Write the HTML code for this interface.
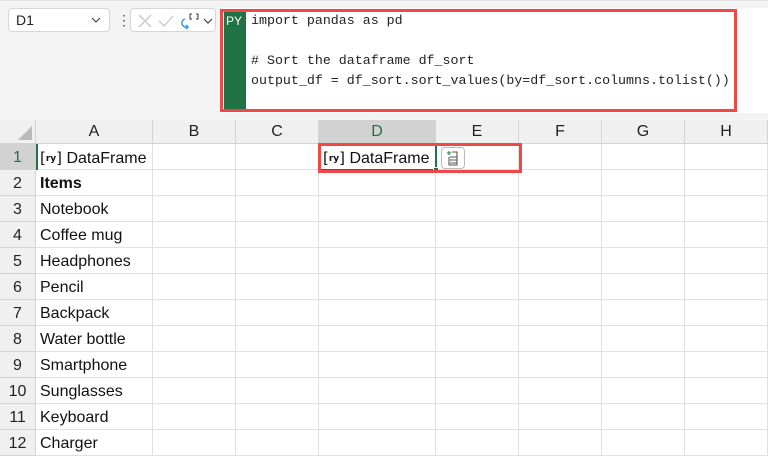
<!DOCTYPE html>
<html><head><style>
*{margin:0;padding:0;box-sizing:border-box}
body{width:768px;height:458px;overflow:hidden;background:#fff;font-family:"Liberation Sans",sans-serif;position:relative}
.top{position:absolute;left:0;top:0;width:768px;height:120px;background:#f3f3f3;border-top:1px solid #e4e4e4}
.nb{position:absolute;left:8px;top:8px;width:102px;height:24px;background:#fff;border:1px solid #d6d6d6;border-radius:4px;font-size:14px;padding:3px 0 0 7px;color:#222}
.fx{position:absolute;left:130px;top:8px;width:86px;height:24px;background:#fff;border:1px solid #d6d6d6;border-radius:4px}
.fbox{position:absolute;left:222px;top:8px;width:546px;height:105px;background:#fff}
.py{position:absolute;left:224px;top:11px;width:22px;height:99px;background:#217346;color:#fff;font-size:12px;padding:3px 0 0 2px}
.code{position:absolute;left:251px;top:11px;font-family:"Liberation Mono",monospace;font-size:13.3px;line-height:20px;color:#222;white-space:pre}
.red{position:absolute;border:3px solid #f04848}
.h{position:absolute;background:#f0f0f0;border-right:1px solid #d4d4d4;border-bottom:1px solid #d4d4d4;text-align:center;font-size:16px;color:#222}
.c{position:absolute;border-right:1px solid #e1e1e1;border-bottom:1px solid #e1e1e1;font-size:16px;color:#111;padding:5px 0 0 4px;white-space:nowrap}
.ic{font-family:"DejaVu Sans",sans-serif;font-size:15px}
.ic i{font-style:normal;font-size:9px;font-weight:bold;vertical-align:2px}
</style></head><body>
<div class="top"></div>
<div class="nb">D1<svg style="position:absolute;right:8px;top:8px" width="10" height="6"><path d="M1 1l4 4 4-4" stroke="#444" fill="none" stroke-width="1.2"/></svg></div>
<div style="position:absolute;left:117px;top:12px;font-size:14px;color:#444">&#8942;</div>
<div class="fx"><svg style="position:absolute;left:7px;top:5px" width="14" height="14"><path d="M1 1l12 12M13 1L1 13" stroke="#c8c8c8" stroke-width="1.3"/></svg><svg style="position:absolute;left:27px;top:5px" width="16" height="14"><path d="M1 7l5 5L15 2" stroke="#c8c8c8" fill="none" stroke-width="1.3"/></svg><svg style="position:absolute;left:50px;top:3px" width="20" height="18"><path d="M4 7a4 4 0 0 0 2 8" stroke="#3a8fd8" fill="none" stroke-width="1.4"/><path d="M5 13l2 2-2 2" stroke="#3a8fd8" fill="none" stroke-width="1.4"/><path d="M11 2h-2v5h2M15 2h2v5h-2" stroke="#333" fill="none"/></svg><svg style="position:absolute;left:72px;top:9px" width="10" height="6"><path d="M1 1l4 4 4-4" stroke="#444" fill="none" stroke-width="1.2"/></svg></div>
<div class="fbox"></div>
<div class="py">PY</div>
<div class="code">import pandas as pd

# Sort the dataframe df_sort
output_df = df_sort.sort_values(by=df_sort.columns.tolist())</div>
<div class="red" style="left:220px;top:9px;width:517px;height:103px"></div>

<div class="h" style="left:0;top:120px;width:36px;height:24px;background:#f0f0f0"><div style="position:absolute;right:3px;bottom:3px;width:0;height:0;border-left:14px solid transparent;border-bottom:14px solid #bbb"></div></div>
<div class="h" style="left:36px;top:120px;width:117px;height:24px;padding-top:3px">A</div>
<div class="h" style="left:153px;top:120px;width:83px;height:24px;padding-top:3px">B</div>
<div class="h" style="left:236px;top:120px;width:83px;height:24px;padding-top:3px">C</div>
<div class="h" style="left:319px;top:120px;width:117px;height:24px;padding-top:3px;background:#d2d2d2;color:#217346">D</div>
<div class="h" style="left:436px;top:120px;width:83px;height:24px;padding-top:3px">E</div>
<div class="h" style="left:519px;top:120px;width:83px;height:24px;padding-top:3px">F</div>
<div class="h" style="left:602px;top:120px;width:83px;height:24px;padding-top:3px">G</div>
<div class="h" style="left:685px;top:120px;width:83px;height:24px;padding-top:3px">H</div>

<div id="rows"></div>
<script>
var df='<span class="ic">[<i>ry</i>]</span> DataFrame';
var items=[df,"<b>Items</b>","Notebook","Coffee mug","Headphones","Pencil","Backpack","Water bottle","Smartphone","Sunglasses","Keyboard","Charger"];
var cols=[[36,117],[153,83],[236,83],[319,117],[436,83],[519,83],[602,83],[685,83]];
var h="";
for(var r=0;r<12;r++){var y=144+r*26;
h+='<div class="h" style="left:0;top:'+y+'px;width:36px;height:26px;padding-top:5px;'+(r==0?'background:#d2d2d2;color:#217346;':'')+'">'+(r+1)+'</div>';
for(var c=0;c<8;c++){var t="";if(c==0)t=items[r];if(r==0&&c==3)t=df;
h+='<div class="c" style="left:'+cols[c][0]+'px;top:'+y+'px;width:'+cols[c][1]+'px;height:26px">'+t+'</div>';}}
document.getElementById("rows").innerHTML=h;
</script>
<div style="position:absolute;left:36px;top:144px;width:2px;height:26px;background:#217346"></div>
<div style="position:absolute;left:319px;top:144px;width:118px;height:27px;border:2px solid #217346"></div>
<div style="position:absolute;left:433px;top:167px;width:6px;height:6px;background:#217346;border:1px solid #fff"></div>
<div style="position:absolute;left:441px;top:147px;width:24px;height:22px;background:#fff;border:1px solid #bbb;border-radius:4px"><svg width="22" height="20" viewBox="0 0 22 20"><path d="M5 5h4M7 3v4" stroke="#2a9d4a" stroke-width="1.3"/><path d="M10 4h5v13H7v-8M8 9h7M8 12h7M8 15h7" stroke="#555" fill="none" stroke-width="1.1"/></svg></div>
<div class="red" style="left:318px;top:143px;width:204px;height:30px"></div>
</body></html>
